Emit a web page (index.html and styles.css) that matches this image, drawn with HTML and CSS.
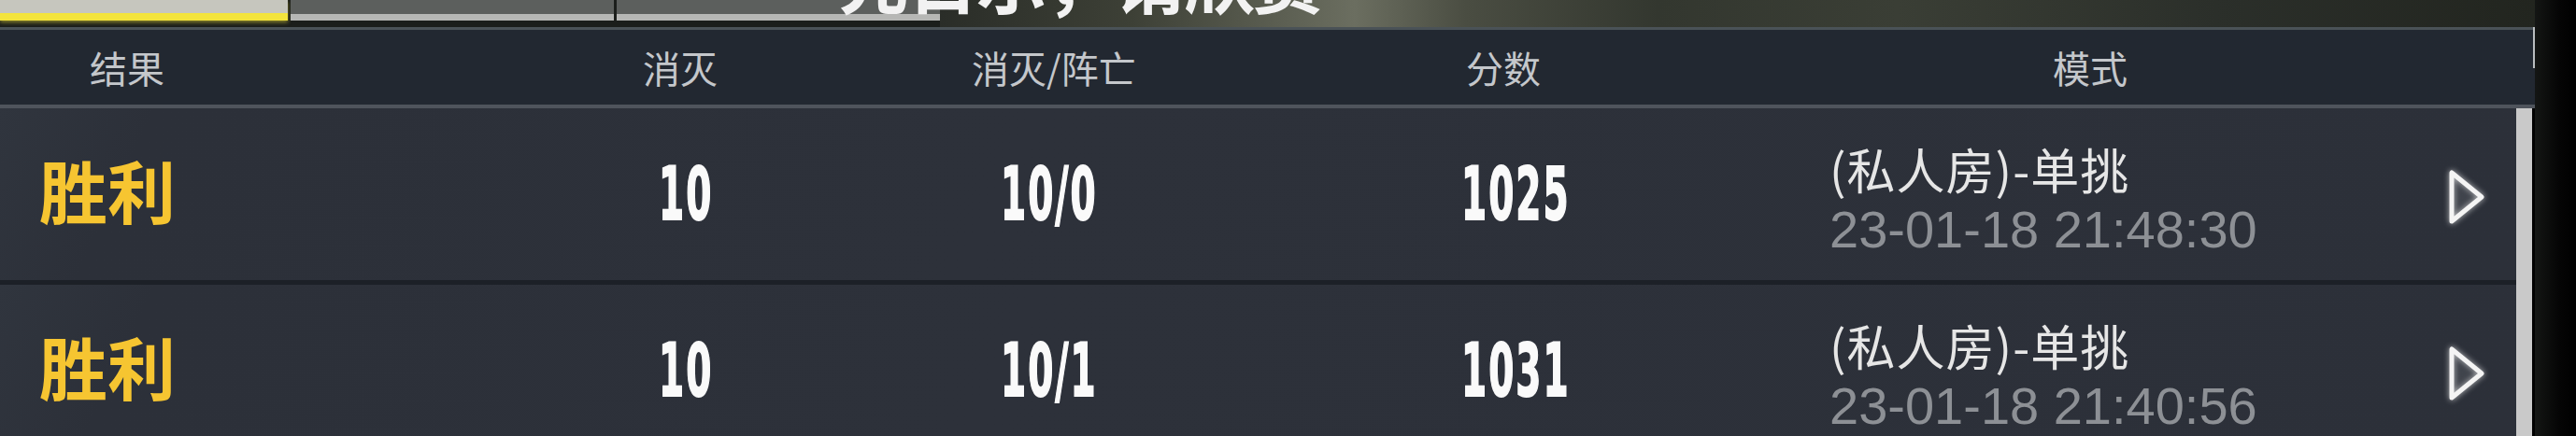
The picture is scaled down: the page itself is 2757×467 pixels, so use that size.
FILE: index.html
```html
<!DOCTYPE html>
<html lang="zh">
<head>
<meta charset="utf-8">
<title>战绩</title>
<link rel="stylesheet" href="styles.css">
</head>
<body>
<div class="screen">
  <div class="content">
    <div class="topbar">
      <div class="tab tab-active"></div>
      <div class="tab tab-idle"></div>
      <div class="tab tab-idle"></div>
      <div class="scene"></div>
      <div class="subtitle">先日示，请欣赏</div>
    </div>
    <div class="panel">
      <div class="head">
        <div class="hcell">结果</div>
        <div class="hcell">消灭</div>
        <div class="hcell">消灭/阵亡</div>
        <div class="hcell">分数</div>
        <div class="hcell">模式</div>
      </div>
      <div class="list">
        <div class="rows">
          <div class="row">
            <div class="result">胜利</div>
            <div class="num"><span class="digits">10</span></div>
            <div class="num"><span class="digits">10/0</span></div>
            <div class="num"><span class="digits">1025</span></div>
            <div class="mode">
              <div class="mode-name">(私人房)-单挑</div>
              <div class="mode-time">23-01-18 21:48:30</div>
            </div>
            <div class="go">
              <svg viewBox="0 0 40 60" width="40" height="60"><polygon points="4,4 4,56 36,30" /></svg>
            </div>
          </div>
          <div class="row">
            <div class="result">胜利</div>
            <div class="num"><span class="digits">10</span></div>
            <div class="num"><span class="digits">10/1</span></div>
            <div class="num"><span class="digits">1031</span></div>
            <div class="mode">
              <div class="mode-name">(私人房)-单挑</div>
              <div class="mode-time">23-01-18 21:40:56</div>
            </div>
            <div class="go">
              <svg viewBox="0 0 40 60" width="40" height="60"><polygon points="4,4 4,56 36,30" /></svg>
            </div>
          </div>
        </div>
        <div class="scrollbar"></div>
        <div class="gutter"></div>
      </div>
    </div>
  </div>
  <div class="edge"></div>
</div>
</body>
</html>
```
FILE: styles.css
```css
html, body {
  margin: 0;
  padding: 0;
  background: #000;
  overflow: hidden;
}
body {
  width: 2757px;
  height: 467px;
  font-family: "Noto Sans CJK SC", "Noto Sans", sans-serif;
}
.screen {
  display: flex;
  width: 2757px;
  height: 467px;
  overflow: hidden;
}
.content {
  width: 2713px;
  flex: none;
  display: flex;
  flex-direction: column;
  overflow: hidden;
}
.edge {
  flex: 1;
  background: linear-gradient(90deg, #141614 0%, #050505 60%, #000 100%);
}

/* top strip with tabs */
.topbar {
  position: relative;
  flex: none;
  height: 29px;
  display: flex;
  background: #1b1e1b;
  overflow: hidden;
}
.tab {
  height: 22px;
  box-sizing: border-box;
  flex: none;
}
.tab-active {
  width: 308px;
  background: #c6c6be;
  border-bottom: 8px solid #f3e43c;
  box-shadow: 0 2px 4px rgba(240, 225, 60, 0.5);
}
.tab-idle {
  width: 346px;
  margin-left: 3px;
  background: #5c5f5d;
  border-bottom: 7px solid #b6b7b5;
}
.scene {
  flex: 1;
  background: linear-gradient(90deg, #2a2d28 0%, #3d4036 12%, #6b6e60 26%, #4a4d42 33%, #33372f 45%, #3a3e35 60%, #2b2f2a 80%, #22251f 100%);
}
.subtitle {
  position: absolute;
  left: 897px;
  top: -62px;
  font-size: 76px;
  line-height: 76px;
  font-weight: 700;
  color: #f2f2f2;
  white-space: nowrap;
  letter-spacing: -2px;
}

/* panel */
.panel {
  flex: 1;
  display: flex;
  flex-direction: column;
  min-height: 0;
}
.head {
  flex: none;
  height: 80px;
  background: #222831;
  border-top: 3px solid #4a5257;
  border-bottom: 4px solid #4f545c;
  display: grid;
  grid-template-columns: 592px 352px 529px 628px 1fr;
  padding-left: 96px;
  align-items: center;
  position: relative;
}
.head::after {
  content: "";
  position: absolute;
  right: 0;
  top: -3px;
  width: 2px;
  height: 44px;
  background: #b8bcbf;
}
.hcell {
  font-size: 40px;
  line-height: 40px;
  color: #c4c7cb;
  white-space: nowrap;
}
.list {
  flex: 1;
  min-height: 0;
  display: grid;
  grid-template-columns: 2693px 17px 1fr;
  overflow: hidden;
}
.rows {
  display: flex;
  flex-direction: column;
}
.row {
  height: 184px;
  flex: none;
  border-bottom: 5px solid #1c2027;
  background: linear-gradient(115deg, #30353e 0%, #2c3039 6%, #2d313a 40%, #2c3039 100%);
  display: grid;
  grid-template-columns: 663px 366px 493px 394px 662px 40px 1fr;
  padding-left: 42px;
  align-items: center;
}
.scrollbar {
  background: #c9c9c9;
}
.gutter {
  background: #000;
}

.result {
  font-size: 73px;
  line-height: 80px;
  font-weight: 700;
  color: #f6c531;
  margin-top: -12px;
  white-space: nowrap;
}
.num {
  white-space: nowrap;
  height: 80px;
  line-height: 80px;
}
.digits {
  display: inline-block;
  font-family: "DejaVu Sans", sans-serif;
  font-weight: 700;
  font-size: 78px;
  line-height: 80px;
  color: #fafafa;
  -webkit-text-stroke: 2px #fafafa;
  transform: scaleX(0.5);
  transform-origin: 0 50%;
  letter-spacing: 4px;
}
.mode {
  display: flex;
  flex-direction: column;
  white-space: nowrap;
  margin-top: 20px;
}
.mode-name {
  font-size: 52px;
  line-height: 46px;
  margin-bottom: 10px;
  letter-spacing: 1px;
  color: #e6e6e6;
}
.mode-time {
  font-family: "Liberation Sans", Arial, sans-serif;
  font-size: 56px;
  line-height: 64px;
  color: #8d9095;
}
.go {
  display: flex;
  align-items: center;
  padding-top: 6px;
}
.go svg {
  display: block;
  overflow: visible;
  filter: drop-shadow(0 0 3px rgba(255, 255, 255, 0.7));
}
.go polygon {
  fill: rgba(255, 255, 255, 0.06);
  stroke: #f4f4f4;
  stroke-width: 5;
  stroke-linejoin: round;
}
```
